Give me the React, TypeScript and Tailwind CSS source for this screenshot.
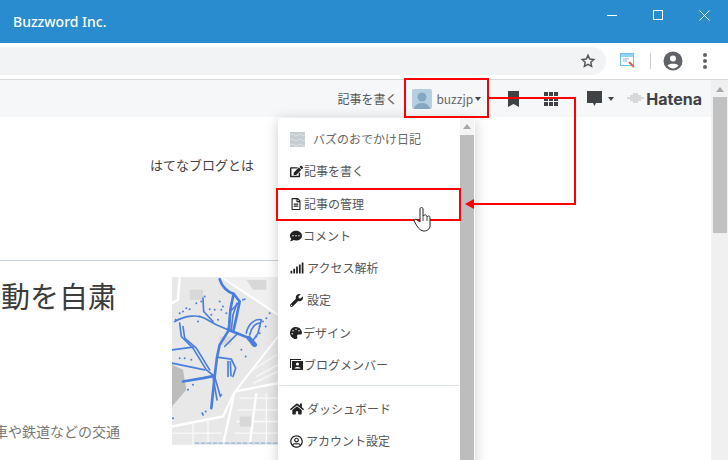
import React from "react";
import {
  FaCommentDots,
  FaEdit,
  FaHome,
  FaPalette,
  FaRegFileAlt,
  FaRegUserCircle,
  FaSignal,
  FaWrench,
} from "react-icons/fa";

const jp = "font-['Noto_Sans_CJK_JP','Noto_Sans',sans-serif]";

const mainTracks = [
  "M180 28 C186 50 205 68 222 72 L240 95 L232 135 L222 180",
  "M222 72 L212 120 L208 180 L180 225 L172 262 L165 320 L155 415",
  "M205 180 L270 205 L280 225",
  "M70 335 L130 325 L165 318",
];

const thinTracks = [
  "M240 95 L212 125 L205 185",
  "M232 100 L220 135 L215 178",
  "M45 155 C80 135 115 135 135 145 L170 165 L205 180",
  "M130 85 L132 125 L160 155",
  "M60 160 L65 200 L100 235 L140 300 L165 320",
  "M70 170 L75 205 L110 235 L150 300",
  "M37 240 L100 232",
  "M37 280 L135 300",
  "M165 320 L182 380",
  "M160 320 L172 390",
  "M172 262 L215 268 L228 295 L220 320",
  "M205 275 L205 320",
  "M212 275 L214 318",
  "M260 190 C265 160 290 145 305 150 L295 190 L278 215",
  "M270 195 C275 170 290 160 300 160",
  "M195 230 L235 190",
];

const dots = [
  [80, 115], [110, 100], [180, 95], [165, 120], [250, 90], [320, 145], [330, 130], [115, 155],
  [75, 265], [95, 270], [128, 430], [138, 425], [85, 360], [258, 260], [245, 240], [185, 375],
  [100, 345], [40, 445], [300, 170], [150, 118], [200, 130], [190, 110], [70, 125], [90, 118],
  [135, 80], [125, 95], [60, 130], [48, 150], [310, 155], [318, 170], [290, 200], [300, 190],
  [120, 140], [155, 135], [175, 150], [130, 435], [60, 265], [255, 88], [215, 100], [185, 120],
];

function CampusMap() {
  return (
    <svg viewBox="37 22 318 503" className="w-[106px] h-[168px] shrink-0">
      <defs>
        <filter id="soft">
          <feGaussianBlur stdDeviation="1.4" />
        </filter>
        <filter id="softer">
          <feGaussianBlur stdDeviation="0.9" />
        </filter>
      </defs>
      <rect x="37" y="22" width="318" height="503" fill="#e8e8e8" />
      <g filter="url(#soft)">
        <path d="M37 285 L70 300 L80 360 L37 410Z" fill="#bdbdbd" />
        <path d="M185 22 L355 135 L355 22Z" fill="#f0f0f0" />
        <path d="M60 22 L55 90 L37 100 M37 470 L190 440 L225 365 L355 340 M225 365 L190 525 M290 370 L270 525" stroke="#fff" strokeWidth="7" fill="none" />
        <path d="M185 22 L355 135 M355 200 L230 360" stroke="#fff" strokeWidth="6" fill="none" />
        <path d="M240 385 H355 M235 420 H355 M230 455 H355 M225 490 H355 M37 490 H185 M100 460 V525 M145 450 V525 M320 370 V525" stroke="#fafafa" strokeWidth="4" fill="none" />
        <path d="M280 300 L350 255 M290 320 L355 285 M280 340 L355 305" stroke="#f6f6f6" strokeWidth="5" fill="none" />
        <path d="M260 30 H320 V60 H280Z M90 60 H130 V90 H90Z M180 200 H215 V225 H180Z M240 440 H275 V470 H240Z" fill="#d8d8d8" />
      </g>
      <g filter="url(#softer)">
        <g fill="none" stroke="#4a7edb" strokeLinecap="round" strokeLinejoin="round">
          {mainTracks.map((d, i) => (
            <path key={i} d={d} strokeWidth="8" />
          ))}
          {thinTracks.map((d, i) => (
            <path key={i} d={d} strokeWidth="5" />
          ))}
          <path d="M268 205 L285 225" strokeWidth="14" />
        </g>
        <g fill="#4a7edb">
          {dots.map(([x, y], i) => (
            <circle key={i} cx={x} cy={y} r="3" />
          ))}
        </g>
      </g>
      <path d="M105 520 H355" stroke="#8fb4d8" strokeWidth="4" strokeDasharray="14 4" />
    </svg>
  );
}

function MemberIcon() {
  return (
    <svg width="13" height="11" viewBox="0 0 13 11">
      <path d="M0 0h11v1H1v8H0z" fill="#222" />
      <rect x="2" y="2" width="11" height="9" fill="#222" />
      <circle cx="7.500" cy="5" r="1.600" fill="#fff" />
      <path d="M4.500 9.500c.5-2 5.500-2 6 0z" fill="#fff" />
    </svg>
  );
}

function MenuItem({ icon, label, active, gap }: { icon: React.ReactNode; label: string; active?: boolean; gap?: string }) {
  return (
    <div className={`h-[32.25px] px-3 flex items-center text-xs text-[#555] whitespace-nowrap ${gap ?? "gap-[2px]"} ${active ? "bg-[#f5f6f8]" : ""}`}>
      <span className="text-[#222] flex items-center">{icon}</span>
      {label}
    </div>
  );
}

function DropMenu() {
  return (
    <div className={`absolute left-[278px] top-[118px] w-[197px] h-[360px] bg-white rounded-[4px] shadow-[0_2px_14px_rgba(0,0,0,0.2)] flex overflow-hidden ${jp}`}>
      <div className="flex-1 pt-[5px] min-w-0">
        <div className="h-[32.25px] px-3 flex items-center gap-2 text-xs text-[#666]">
          <svg width="15" height="15" viewBox="0 0 15 15">
            <rect width="15" height="15" fill="#c6cdd1" />
            <path d="M0 3q2-2 4 0t4 0 4 0 3 0M0 8q2-2 4 0t4 0 4 0 3 0M0 13q2-2 4 0t4 0 4 0 3 0" stroke="#dde2e4" fill="none" />
          </svg>
          バズのおでかけ日記
        </div>
        <MenuItem icon={<FaEdit size={13} />} label="記事を書く" gap="gap-px" />
        <MenuItem icon={<FaRegFileAlt size={12} />} label="記事の管理" />
        <MenuItem icon={<FaCommentDots size={12} />} label="コメント" gap="gap-px" />
        <MenuItem icon={<FaSignal size={14} />} label="アクセス解析" gap="gap-[3px]" />
        <MenuItem icon={<FaWrench size={13} />} label="設定" gap="gap-[4px]" />
        <MenuItem icon={<FaPalette size={12} />} label="デザイン" gap="gap-px" />
        <MenuItem icon={<MemberIcon />} label="ブログメンバー" gap="gap-px" />
        <div className="h-px bg-[#dfe6ea] mx-px mt-[4px] mb-[7px]" />
        <MenuItem icon={<FaHome size={14} />} label="ダッシュボード" gap="gap-[3px]" />
        <MenuItem icon={<FaRegUserCircle size={13} />} label="アカウント設定" gap="gap-[3px]" />
      </div>
      <div className="w-[14px] mr-px flex flex-col items-center bg-[#f4f4f4]">
        <span className="mt-[6px] mb-[6px] border-x-[4px] border-x-transparent border-b-[5px] border-b-[#a8a8a8]" />
        <span className="w-full flex-1 bg-[#bdbdbd]" />
      </div>
    </div>
  );
}

function Annotations() {
  return (
    <>
      <div className="absolute left-[404px] top-[78px] w-[85px] h-[40px] border-2 border-[#f00]" />
      <div className="absolute left-[276px] top-[188px] w-[185px] h-[33px] border-2 border-[#f00]" />
      <svg className="absolute left-0 top-0 pointer-events-none" width="728" height="460">
        <path d="M489 98 H575 V204 H472" fill="none" stroke="#f00" strokeWidth="2" />
        <path d="M465 204 L474 199 V209Z" fill="#f00" />
        <path
          d="M420 209 C420 207 423 207 423 209 V216 C425 214 427 215 427 217 C429 215 430 216 430 218 V226 C430 229 427 231 424 231 C421 231 419 229 417 226 L414 221 C414 219 416 219 417 220 L420 222Z"
          fill="#fff"
          stroke="#222"
          strokeWidth="1"
        />
        <path d="M423 216 V221 M427 217 V221" stroke="#222" strokeWidth="0.8" />
      </svg>
    </>
  );
}

export default function App() {
  return (
    <div className="relative w-[728px] h-[460px] overflow-hidden bg-white flex flex-col font-['Noto_Sans',sans-serif]">
      {/* window title */}
      <div className="h-[43px] shrink-0 bg-[#288cce] flex justify-between pl-[13px] pr-px text-white">
        <span className="text-[14px] font-medium leading-[43px]">Buzzword Inc.</span>
        <div className="flex items-start pt-[10px]">
          <span className="w-[46px] h-[10px] flex items-center justify-center"><span className="w-[10px] h-px bg-white" /></span>
          <span className="w-[46px] flex justify-center"><span className="w-[10px] h-[10px] border border-white" /></span>
          <span className="w-[46px] flex justify-center">
            <svg width="11" height="11" viewBox="0 0 11 11"><path d="M.5.5l10 10M10.500.5l-10 10" stroke="#fff" /></svg>
          </span>
        </div>
      </div>

      {/* chrome toolbar */}
      <div className="h-[37px] shrink-0 bg-white border-b border-[#d8d8d8] flex items-center">
        <div className="w-[606px] h-[28px] bg-[#f1f3f4] rounded-r-[14px] flex items-center justify-end pr-[10px]">
          <svg width="16" height="16" viewBox="0 0 24 24" fill="none" stroke="#555" strokeWidth="2.2">
            <path d="M12 3.500l2.600 5.600 6.100.7-4.500 4.200 1.200 6-5.400-3-5.400 3 1.200-6L3.300 9.800l6.100-.7z" />
          </svg>
        </div>
        <div className="flex items-center">
          <svg width="16" height="16" viewBox="0 0 16 16" className="ml-[14px]">
            <rect x=".5" y=".5" width="13" height="12" fill="#fff" stroke="#6cc0f0" />
            <rect x="1" y="1" width="12" height="3" fill="#8fd3f7" />
            <path d="M3 6h6M3 8h4" stroke="#9ad" />
            <path d="M9 9l5 5" stroke="#e8604c" strokeWidth="2" />
          </svg>
          <span className="w-px h-4 bg-[#cfcfcf] ml-[14px]" />
          <svg width="20" height="20" viewBox="0 0 20 20" className="ml-[12px]">
            <circle cx="10" cy="10" r="9.500" fill="#5f6368" />
            <circle cx="10" cy="7.500" r="3" fill="#fff" />
            <path d="M4.500 14.500c1.500-2.500 9.500-2.500 11 0-1.500 2-3.500 3-5.500 3s-4-1-5.500-3z" fill="#fff" />
          </svg>
          <span className="ml-[20px] flex flex-col gap-[2px]">
            <span className="w-1 h-1 rounded-full bg-[#5f6368]" />
            <span className="w-1 h-1 rounded-full bg-[#5f6368]" />
            <span className="w-1 h-1 rounded-full bg-[#5f6368]" />
          </span>
        </div>
      </div>

      <div className="flex-1 flex min-h-0">
        <div className="flex-1 min-w-0 flex flex-col overflow-hidden">
          {/* hatena bar */}
          <div className={`h-[37px] shrink-0 bg-[#f6f7f9] flex items-center justify-end pr-[9px] text-xs text-[#555] ${jp}`}>
            <span>記事を書く</span>
            <span className="ml-[15px] w-5 h-5 rounded-[2px] bg-[#b5cfe2] overflow-hidden">
              <svg viewBox="0 0 20 20" className="w-5 h-5">
                <circle cx="10" cy="8" r="4.500" fill="#84a7c4" />
                <path d="M2 20c1-5 5-6 8-6s7 1 8 6z" fill="#84a7c4" />
              </svg>
            </span>
            <span className="ml-1 text-[#666]">buzzjp</span>
            <span className="ml-[2px] border-x-[3px] border-x-transparent border-t-[4px] border-t-[#444]" />
            <svg width="11" height="16" viewBox="0 0 11 16" className="ml-[27px]">
              <path d="M0 0h11v16l-5.500-3L0 16z" fill="#3f4345" />
            </svg>
            <span className="ml-[25px] grid grid-cols-3 gap-px w-[14px]">
              {Array.from({ length: 9 }).map((_, i) => (
                <span key={i} className="h-1 bg-[#3f4345]" />
              ))}
            </span>
            <span className="ml-[2px] w-[12px]" />
            <svg width="15" height="15" viewBox="0 0 15 15" className="ml-[15px]">
              <path d="M0 0h15v12H9l-1.500 3L6 12H0z" fill="#3f4345" />
            </svg>
            <span className="ml-[6px] border-x-[3px] border-x-transparent border-t-[4px] border-t-[#444]" />
            <svg width="19" height="11" viewBox="0 0 19 11" className="ml-[12px]">
              <path d="M7 1h5M4 3h11M1 5h17M4 7h11M7 9h5" stroke="#aaa" strokeWidth=".8" />
            </svg>
            <span className="ml-[1px] text-[16px] font-bold text-[#3f4345] font-['Inter',sans-serif] leading-none">Hatena</span>
          </div>

          {/* blog page */}
          <div className={`flex-1 ${jp}`}>
            <div className="h-[144px] border-b border-[#c5d3da] w-[300px]">
              <p className="pt-[38px] pl-[150px] text-[13px] text-[#444] whitespace-nowrap">はてなブログとは</p>
            </div>
            <div className="flex pt-[16px]">
              <div className="w-[172px] shrink-0 whitespace-nowrap">
                <h2 className="text-[29px] leading-[36px] text-[#3c3c3c] ml-[-28px]">活動を自粛</h2>
                <p className="mt-[108px] text-[14px] leading-5 text-[#777] ml-[-6px]">車や鉄道などの交通</p>
              </div>
              <CampusMap />
            </div>
          </div>
        </div>

        {/* page scrollbar */}
        <div className="w-[17px] shrink-0 bg-[#f0f0f0] flex flex-col items-center">
          <span className="mt-[7px] mb-[5px] border-x-[4px] border-x-transparent border-b-[5px] border-b-[#a8a8a8]" />
          <span className="w-[14px] h-[136px] bg-[#c1c1c1]" />
        </div>
      </div>

      <DropMenu />
      <Annotations />
    </div>
  );
}
